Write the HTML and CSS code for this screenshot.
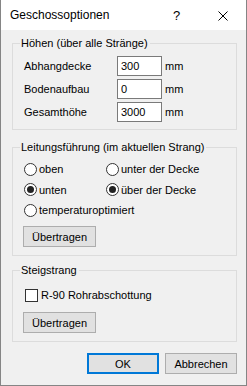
FILE: index.html
```html
<!DOCTYPE html>
<html lang="de">
<head>
    <meta charset="UTF-8">
    <title>Geschossoptionen</title>
    <link rel="stylesheet" href="styles.css">
</head>
<body>
    <div class="window">
        <div class="titlebar">
            <span class="title">Geschossoptionen</span>
            <span class="help">?</span>
            <span class="close">
                <svg width="10" height="10" viewBox="0 0 10 10"><path d="M0.5 0.5 L9.5 9.5 M9.5 0.5 L0.5 9.5" stroke="#000" stroke-width="1" fill="none"/></svg>
            </span>
        </div>
        <div class="content">
            <fieldset class="group heights">
                <legend>Höhen (über alle Stränge)</legend>
                <div class="row">
                    <label class="name">Abhangdecke</label>
                    <input class="field" type="text" value="300">
                    <span class="unit">mm</span>
                </div>
                <div class="row">
                    <label class="name">Bodenaufbau</label>
                    <input class="field" type="text" value="0">
                    <span class="unit">mm</span>
                </div>
                <div class="row">
                    <label class="name">Gesamthöhe</label>
                    <input class="field" type="text" value="3000">
                    <span class="unit">mm</span>
                </div>
            </fieldset>

            <fieldset class="group routing">
                <legend>Leitungsführung (im aktuellen Strang)</legend>
                <div class="options">
                    <label class="opt"><span class="radio"></span>oben</label>
                    <label class="opt"><span class="radio"></span>unter der Decke</label>
                    <label class="opt"><span class="radio on"></span>unten</label>
                    <label class="opt"><span class="radio on"></span>über der Decke</label>
                    <label class="opt wide"><span class="radio"></span>temperaturoptimiert</label>
                </div>
                <button class="btn">Übertragen</button>
            </fieldset>

            <fieldset class="group riser">
                <legend>Steigstrang</legend>
                <label class="check"><span class="box"></span>R-90 Rohrabschottung</label>
                <button class="btn">Übertragen</button>
            </fieldset>

            <div class="actions">
                <button class="btn default">OK</button>
                <button class="btn">Abbrechen</button>
            </div>
        </div>
    </div>
</body>
</html>
```

FILE: styles.css
```css
body {
    margin: 0;
    font-family: "Liberation Sans", Arial, sans-serif;
    font-size: 11px;
    color: #000;
    background: #fff;
}
.window {
    width: 247px;
    height: 386px;
    box-sizing: border-box;
    border: 1px solid #858585;
    border-top: none;
    display: flex;
    flex-direction: column;
}
.titlebar {
    height: 30px;
    background: #fff;
    display: flex;
    align-items: center;
}
.title {
    font-size: 12px;
    padding-left: 9px;
    flex: 1;
}
.help {
    font-size: 13px;
    width: 24px;
    margin-right: 21px;
}
.close {
    width: 28px;
    display: flex;
    padding-top: 1px;
}
.content {
    flex: 1;
    background: #f0f0f0;
    padding: 6px 9px 0 11px;
}
.group {
    margin: 0;
    border: 1px solid #dcdcdc;
    padding: 0 0 7px 11px;
    min-width: 0;
}
.group legend {
    padding: 0 2px 0 1px;
    margin-left: -4px;
    line-height: 14px;
}
.heights {
    padding-top: 6px;
}
.row {
    display: flex;
    align-items: center;
    height: 20px;
    margin-bottom: 3px;
}
.row:last-child {
    margin-bottom: 0;
}
.name {
    width: 93px;
}
.field {
    width: 45px;
    height: 20px;
    box-sizing: border-box;
    border: 1px solid #7a7a7a;
    background: #fff;
    font: inherit;
    padding: 0 3px;
    margin: 0;
}
.unit {
    margin-left: 3px;
}
.routing {
    margin-top: 10px;
    padding-bottom: 8px;
}
.options {
    display: grid;
    grid-template-columns: 82px 1fr;
    grid-auto-rows: 20px;
    row-gap: 0.5px;
    padding-top: 5px;
}
.opt, .check {
    display: flex;
    align-items: center;
    gap: 2px;
}
.wide {
    grid-column: 1 / 3;
}
.radio {
    width: 13px;
    height: 13px;
    box-sizing: border-box;
    border: 1px solid #333;
    border-radius: 50%;
    background: #fff;
    display: flex;
    align-items: center;
    justify-content: center;
}
.radio.on::after {
    content: "";
    width: 7px;
    height: 7px;
    border-radius: 50%;
    background: #222;
}
.btn {
    font: inherit;
    color: #000;
    background: #e1e1e1;
    border: 1px solid #adadad;
    width: 73px;
    height: 21px;
    padding: 0;
    margin: 0;
}
.routing .btn {
    margin-top: 6px;
    margin-left: -1px;
}
.riser {
    margin-top: 7px;
    padding-bottom: 8px;
}
.check {
    height: 20px;
    margin-top: 8px;
    gap: 3px;
    padding-left: 1px;
}
.box {
    width: 13px;
    height: 13px;
    box-sizing: border-box;
    border: 1px solid #333;
    background: #fff;
}
.riser .btn {
    margin-top: 7px;
    margin-left: -1px;
}
.actions {
    display: flex;
    justify-content: flex-end;
    gap: 6px;
    margin-top: 11px;
}
.actions .btn {
    width: 72px;
}
.btn.default {
    border: 2px solid #0078d7;
}
```
